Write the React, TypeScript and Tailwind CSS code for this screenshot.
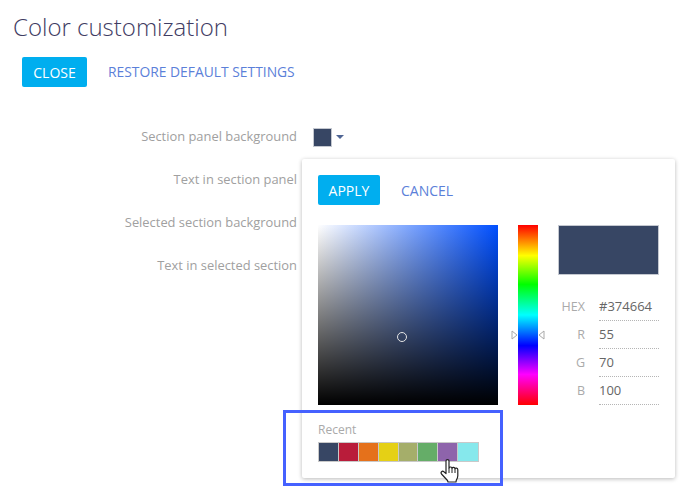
const ROWS = ['Section panel background', 'Text in section panel', 'Selected section background', 'Text in selected section']
const RECENT = ['#374664', '#b91c3a', '#e5711b', '#e5d015', '#a5ae6a', '#65ad68', '#8e64ab', '#86e8ec']
const VALUES = [
  { label: 'R', value: '55' },
  { label: 'G', value: '70' },
  { label: 'B', value: '100' },
]

function Field({ label, value }: { label: string; value: string }) {
  return (
    <div className="flex h-[28px] items-center">
      <span className="w-[27px] text-right text-[12.5px] text-[#aaa]">{label}</span>
      <span className="ml-[14px] flex h-[28px] w-[60px] items-center border-b border-dotted border-[#b5b5b5] text-[13px] text-[#666]">{value}</span>
    </div>
  )
}

function HandCursor() {
  return (
    <svg width="20" height="25" viewBox="0 0 20 25" className="absolute left-[440px] top-[459px]">
      <path
        d="M6 2c0-1.8 3-1.8 3 0v7c.4-1.4 3-1.4 3 .3.4-1.2 2.8-1.2 3 .4.4-1 2.8-.8 2.8 1v6c0 2-.8 3.3-1.5 4.5l-.3 1.8H8l-.5-1.5L1.5 15c-1.3-1.8.8-3.6 2.4-2.2L6 14.5z"
        fill="#fff"
        stroke="#222"
        strokeWidth="1.2"
        strokeLinejoin="round"
      />
      <path d="M9 9v5M12 9.3v4.7M15 9.7v4.3" stroke="#222" strokeWidth="1" fill="none" />
    </svg>
  )
}

export default function App() {
  return (
    <div className="relative h-[487px] w-[687px] overflow-hidden bg-white font-['Open_Sans',sans-serif]">
      <h1 className="pl-[13px] pt-[10px] text-[24px] font-light leading-[33px] text-[#3f3c63]">Color customization</h1>

      <div className="mt-[14px] flex items-center pl-[22px]">
        <button className="h-[30px] w-[65px] rounded-[2px] bg-[#00aeef] text-[14px] font-medium text-white">CLOSE</button>
        <span className="ml-[21px] text-[13.85px] text-[#5b80d9]">RESTORE DEFAULT SETTINGS</span>
      </div>

      {/* Settings rows */}
      <div className="mt-[40px] flex flex-col gap-[23px]">
        {ROWS.map((row, i) => (
          <div key={row} className="flex h-[20px] items-center">
            <span className="w-[297px] text-right text-[12.9px] text-[#a0a0a0]">{row}</span>
            {i === 0 && (
              <div className="ml-[16px] flex items-center">
                <div className="h-[19px] w-[19px] border border-[#c4c8d0] bg-[#374664]" />
                <div className="ml-[4px] h-0 w-0 border-x-[4px] border-t-[4px] border-x-transparent border-t-[#4f6594]" />
              </div>
            )}
          </div>
        ))}
      </div>

      {/* Colour picker popup */}
      <div className="absolute left-[302px] top-[159px] h-[319px] w-[373px] rounded-[2px] bg-white pl-[16px] pt-[16px] shadow-[0_1px_4px_rgba(0,0,0,0.28)]">
        <div className="flex items-center">
          <button className="h-[30px] w-[62px] rounded-[2px] bg-[#00aeef] text-[14px] font-medium text-white">APPLY</button>
          <span className="ml-[21px] text-[14px] text-[#5b80d9]">CANCEL</span>
        </div>

        <div className="mt-[20px] flex">
          <div className="relative h-[180px] w-[180px] bg-[linear-gradient(to_top,#000,rgba(0,0,0,0)),linear-gradient(to_right,#fff,#004fff)]">
            <div className="absolute left-[79px] top-[107px] h-[10px] w-[10px] rounded-full border border-[#e5e5e5]" />
          </div>

          <div className="relative ml-[20px] h-[180px] w-[20px] bg-[linear-gradient(to_bottom,#f00,#ff0_17%,#0f0_33%,#0ff_50%,#00f_67%,#f0f_83%,#f00)]">
            <svg width="7" height="10" viewBox="0 0 7 10" className="absolute left-[-7px] top-[105px]">
              <path d="M1 1l5 4-5 4z" fill="#fff" stroke="#aaa" />
            </svg>
            <svg width="7" height="10" viewBox="0 0 7 10" className="absolute right-[-7px] top-[105px]">
              <path d="M6 1L1 5l5 4z" fill="#fff" stroke="#aaa" />
            </svg>
          </div>

          <div className="ml-[20px] w-[101px]">
            <div className="h-[50px] w-[101px] border border-[#c4c8d0] bg-[#374664]" />
            <div className="mt-[18px]">
              <Field label="HEX" value="#374664" />
              {VALUES.map(v => <Field key={v.label} label={v.label} value={v.value} />)}
            </div>
          </div>
        </div>

        <p className="mt-[15px] text-[12px] leading-[20px] text-[#aaa]">Recent</p>
        <div className="mt-[2px] flex w-[161px] border border-[#c9c9c9] bg-[#c9c9c9]">
          {RECENT.map(c => (
            <div key={c} className="mr-px h-[18px] w-[19px] last:mr-0 last:w-[20px]" style={{ backgroundColor: c }} />
          ))}
        </div>
      </div>

      {/* Highlight frame around the recent colours */}
      <div className="absolute left-[283px] top-[410px] h-[76px] w-[220px] border-[3px] border-[#4561ff]" />
      <HandCursor />
    </div>
  )
}
